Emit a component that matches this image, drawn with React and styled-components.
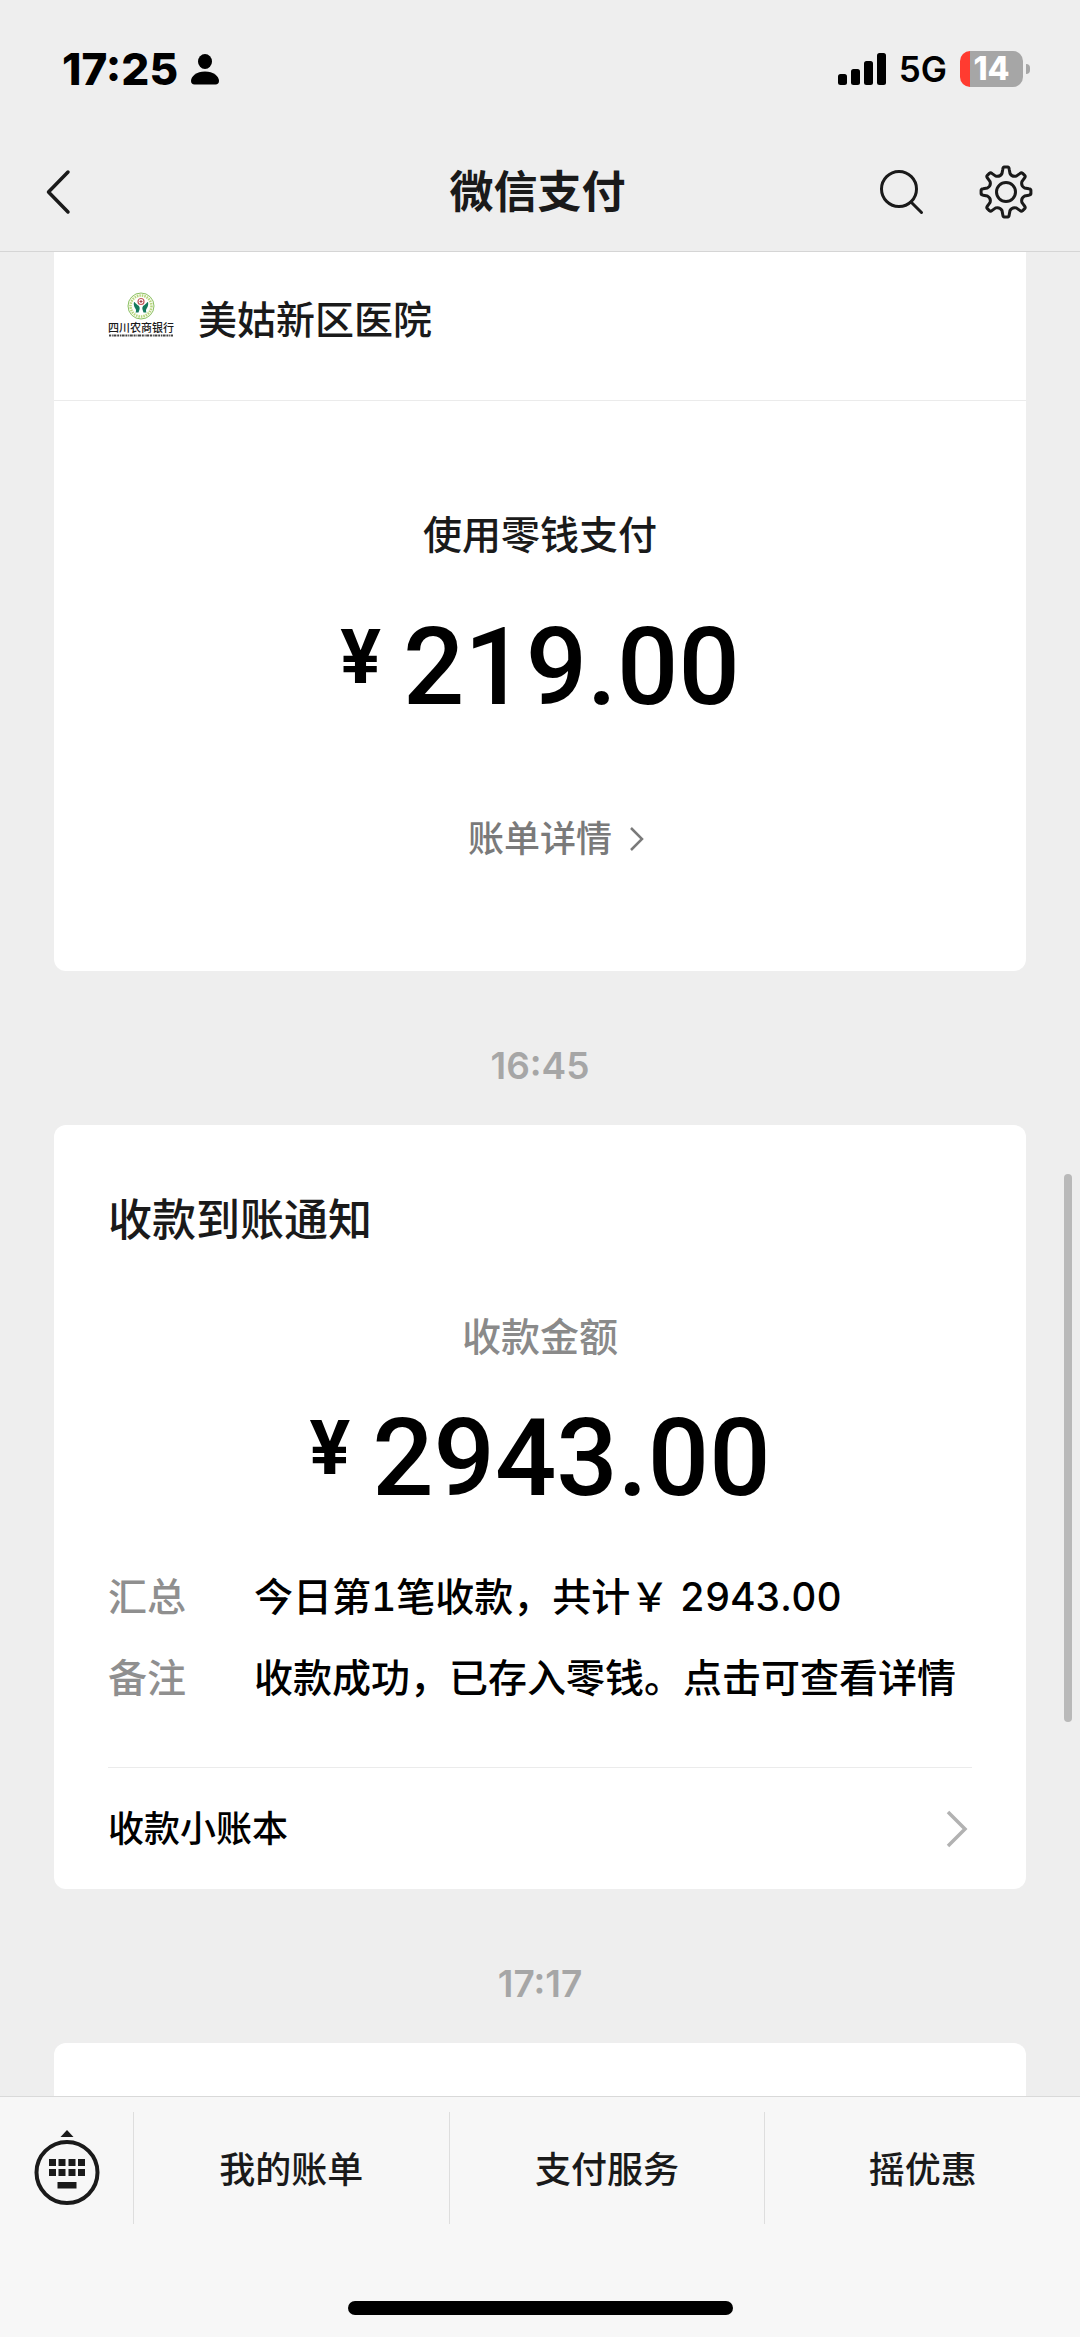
import React from 'react';
import styled, { createGlobalStyle } from 'styled-components';

const GlobalStyle = createGlobalStyle`
  *, *::before, *::after { box-sizing: border-box; }
  body {
    margin: 0;
    background: #eeeeee;
    color: #1a1a1a;
    font-family: Inter, "Noto Sans CJK SC", sans-serif;
    font-size: 39px;
    font-weight: 500;
  }
  h1, h2, p, dl, dt, dd { margin: 0; font: inherit; }
  svg { display: block; flex: none; }
`;

const Screen = styled.div`
  position: relative;
  display: flex;
  flex-direction: column;
  min-height: 100vh;
  overflow: hidden;
`;

const Header = styled.header`
  border-bottom: 1px solid #d5d5d5;
`;

const StatusBar = styled.div`
  display: flex;
  align-items: center;
  justify-content: space-between;
  height: 138px;
  padding: 0 50px 0 62px;
  color: #000;
`;

const StatusGroup = styled.div`
  display: flex;
  align-items: center;
  gap: ${(p) => p.$gap}px;
`;

const Clock = styled.time`
  font-size: 44px;
  font-weight: 800;
  line-height: 48px;
`;

const Network = styled.span`
  font-size: 35px;
  font-weight: 600;
  line-height: 40px;
`;

const Battery = styled.span`
  display: flex;
  align-items: center;
  gap: 3px;
`;

const BatteryBody = styled.span`
  display: flex;
  align-items: center;
  justify-content: center;
  width: 63px;
  height: 36px;
  border-radius: 10px;
  background: linear-gradient(to right, #ff3b30 10px, #a6a6a6 10px);
  color: #fff;
  font-size: 32px;
  font-weight: 800;
  line-height: 36px;
`;

const BatteryNub = styled.span`
  width: 4px;
  height: 10px;
  border-radius: 0 5px 5px 0;
  background: #a6a6a6;
`;

const NavBar = styled.nav`
  display: grid;
  grid-template-columns: 1fr auto 1fr;
  align-items: center;
  height: 113px;
  padding: 0 47px 6px 42px;
`;

const Title = styled.h1`
  font-size: 44px;
  font-weight: 700;
  line-height: 60px;
`;

const NavActions = styled.div`
  display: flex;
  justify-content: flex-end;
  gap: 52px;
`;

const IconButton = styled.button`
  display: flex;
  justify-self: start;
  padding: 0;
  border: 0;
  background: none;
  color: #1a1a1a;
`;

const Messages = styled.main`
  position: relative;
  display: flex;
  flex: 1;
  flex-direction: column;
  padding: 0 54px;
`;

const ScrollThumb = styled.div`
  position: absolute;
  top: 50%;
  right: 8px;
  width: 8px;
  height: 548px;
  border-radius: 4px;
  background: #b9b9b9;
`;

const Card = styled.article`
  flex: ${(p) => (p.$fill ? 1 : 'none')};
  border-radius: ${(p) => p.$radius};
  background: #fff;
`;

const Merchant = styled.div`
  display: flex;
  align-items: center;
  gap: 24px;
  height: 149px;
  padding: 0 54px 12px;
  border-bottom: 1px solid #ebebeb;
`;

const MerchantName = styled.h2`
  line-height: 56px;
`;

const Logo = styled.div`
  display: flex;
  flex-direction: column;
  align-items: center;
  padding-bottom: 12px;
`;

const LogoName = styled.span`
  font-family: "Noto Sans CJK SC", sans-serif;
  font-size: 11px;
  font-weight: 500;
  line-height: 14px;
`;

const PaymentBody = styled.div`
  padding: 106px 54px 108px;
`;

const Caption = styled.p`
  color: ${(p) => (p.$muted ? '#8a8a8a' : '#1a1a1a')};
  line-height: 56px;
  text-align: center;
`;

const AmountRow = styled.p`
  display: flex;
  justify-content: center;
  gap: 22px;
  color: #000;
  font-family: Roboto, sans-serif;
  font-size: 108px;
  font-weight: 500;
  line-height: 112px;
`;

const Currency = styled.span`
  font-size: 76px;
  font-weight: 700;
  line-height: 92px;
`;

const PaymentAmount = styled.div`
  padding: 48px 0 92px;
`;

const DetailLink = styled.a`
  display: grid;
  grid-template-columns: 1fr auto 1fr;
  align-items: center;
  column-gap: 17px;
  color: #7a7a7a;
  font-size: 36px;
  line-height: 48px;
  text-decoration: none;

  &::before { content: ''; }
`;

const Timestamp = styled.time`
  display: block;
  height: 154px;
  padding-top: 71px;
  color: #a6a6a6;
  font-size: 37px;
  font-weight: 600;
  line-height: 48px;
  text-align: center;
`;

const NoticeBody = styled.div`
  padding: 65px 54px 0;
`;

const NoticeTitle = styled.h2`
  padding-bottom: 59px;
  font-size: 44px;
  line-height: 60px;
`;

const NoticeAmount = styled.div`
  padding: 37px 0 55px;
`;

const Facts = styled.dl`
  display: grid;
  grid-template-columns: auto 1fr;
  gap: 25px 68px;
  padding-bottom: 61px;
  font-variant-numeric: tabular-nums;
  line-height: 56px;
  white-space: nowrap;
`;

const FactName = styled.dt`
  color: #8f8f8f;
`;

const FactValue = styled.dd`
  color: #000;
`;

const LedgerLink = styled.a`
  display: flex;
  align-items: center;
  justify-content: space-between;
  height: 122px;
  padding-right: 4px;
  border-top: 1px solid #ebebeb;
  color: #000;
  font-size: 36px;
  line-height: 48px;
  text-decoration: none;
`;

const Footer = styled.footer`
  padding: 15px 0 22px;
  border-top: 1px solid #d9d9d9;
  background: #f7f7f7;
`;

const Menu = styled.div`
  display: flex;
  height: 112px;
`;

const KeyboardButton = styled.button`
  display: flex;
  align-items: center;
  width: 133px;
  padding: 0 0 0 34px;
  border: 0;
  background: none;
  color: #1a1a1a;
`;

const MenuButton = styled.button`
  flex: 1;
  padding: 4px 0 0;
  border: 0;
  border-left: 1px solid #dedede;
  background: none;
  color: #1a1a1a;
  font: inherit;
  font-size: 36px;
  line-height: 48px;
`;

const HomeIndicator = styled.div`
  width: 385px;
  height: 14px;
  margin: 77px auto 0;
  border-radius: 7px;
  background: #000;
`;

function gearOutline(cx, cy) {
  const at = (r, deg) => {
    const a = (deg * Math.PI) / 180;
    return `${(cx + r * Math.sin(a)).toFixed(1)} ${(cy - r * Math.cos(a)).toFixed(1)}`;
  };
  let d = '';
  for (let i = 0; i < 8; i += 1) {
    const a = i * 45;
    d += `${i ? 'L' : 'M'}${at(19, a - 12)} L${at(23, a - 8)} Q${at(25, a - 7)} ${at(25, a - 4)} `;
    d += `L${at(25, a + 4)} Q${at(25, a + 7)} ${at(23, a + 8)} L${at(19, a + 12)} `;
    d += `Q${at(16, a + 22.5)} ${at(19, a + 33)} `;
  }
  return `${d}Z`;
}

const GearIcon = () => (
  <svg width="54" height="54" viewBox="0 0 54 54" fill="none" stroke="currentColor" strokeWidth="3" strokeLinejoin="round">
    <path d={gearOutline(27, 27)} />
    <circle cx="27" cy="27" r="9.5" />
  </svg>
);

const SearchIcon = () => (
  <svg width="48" height="54" viewBox="0 0 48 54" fill="none" stroke="currentColor" strokeWidth="3" strokeLinecap="round">
    <circle cx="20" cy="24" r="17.5" />
    <path d="M32 37 42.500 47.500" />
  </svg>
);

const BackIcon = () => (
  <svg width="32" height="48" viewBox="0 0 32 48" fill="none" stroke="currentColor" strokeWidth="3.5" strokeLinecap="round" strokeLinejoin="round">
    <path d="M26 4 6.5 24 26 44" />
  </svg>
);

const PersonIcon = () => (
  <svg width="30" height="32" viewBox="0 0 30 32" fill="currentColor">
    <ellipse cx="15" cy="8.5" rx="7" ry="7.5" />
    <path d="M15 18.5c8.500 0 14 4.800 14 9.500 0 2.200-1.300 3.500-3.500 3.500h-21C2.300 31.500 1 30.200 1 28c0-4.700 5.500-9.500 14-9.500Z" />
  </svg>
);

const SignalIcon = () => (
  <svg width="48" height="34" viewBox="0 0 48 34" fill="currentColor">
    <rect x="0" y="22" width="9" height="11" rx="2.500" />
    <rect x="13" y="17" width="9" height="16" rx="2.500" />
    <rect x="26" y="9" width="9" height="24" rx="2.500" />
    <rect x="39" y="1" width="9" height="32" rx="2.500" />
  </svg>
);

const KeyboardIcon = () => (
  <svg width="66" height="78" viewBox="0 0 66 78" fill="currentColor">
    <path d="M33 1 39.500 8h-13Z" />
    <circle cx="33" cy="43.500" r="30.500" fill="none" stroke="currentColor" strokeWidth="4" />
    {[15, 24.5, 34.5, 44].map((x) => (
      <g key={x}>
        <rect x={x} y="30" width="7" height="7" />
        <rect x={x} y="40" width="7" height="7" />
      </g>
    ))}
    <rect x="23.500" y="53" width="19" height="6.500" />
  </svg>
);

const SmallChevron = () => (
  <svg width="16" height="26" viewBox="0 0 16 26" fill="none" stroke="currentColor" strokeWidth="2.500">
    <path d="m2 2 11 11L2 24" />
  </svg>
);

const LargeChevron = () => (
  <svg width="22" height="38" viewBox="0 0 22 38" fill="none" stroke="#b2b2b2" strokeWidth="3.500">
    <path d="m2 2 17 17L2 36" />
  </svg>
);

const BankEmblem = () => (
  <svg width="28" height="28" viewBox="0 0 28 28">
    <circle cx="14" cy="14" r="13" fill="#fbfdf4" stroke="#8cc063" strokeWidth="1" />
    <circle cx="14" cy="14" r="10.500" fill="none" stroke="#b5d47c" strokeWidth="2.500" strokeDasharray="1.500 1" />
    <circle cx="14" cy="14" r="8.500" fill="#fff" />
    <path d="M7 10c1 0 2 2 3.500 3 2 1 2.500 2.500 2 4.500l-1 3H8.500c1-2 .5-3-.5-4.500-1.200-2-1.500-4-1-6Z" fill="#137a5c" />
    <path d="M21 10c-1 0-2 2-3.500 3-2 1-2.500 2.500-2 4.500l1 3h3c-1-2-.5-3 .5-4.500 1.200-2 1.500-4 1-6Z" fill="#137a5c" />
    <circle cx="14" cy="9.500" r="3" fill="#fff" stroke="#c4565a" strokeWidth="1.200" />
    <path d="M14 8v3M12.500 9.500h3" stroke="#a04048" strokeWidth="1" />
  </svg>
);

const LogoRule = () => (
  <svg width="66" height="3" viewBox="0 0 66 3" stroke="#444" strokeWidth="2">
    <path d="M1 1.500h64" strokeDasharray="2 .8 1 .6 3 .8" />
  </svg>
);

const Amount = ({ value }) => (
  <AmountRow>
    <Currency>¥</Currency>
    <span>{value}</span>
  </AmountRow>
);

const facts = [
  ['汇总', '今日第1笔收款，共计￥ 2943.00'],
  ['备注', '收款成功，已存入零钱。点击可查看详情'],
];

export default function App() {
  return (
    <Screen>
      <GlobalStyle />
      <Header>
        <StatusBar>
          <StatusGroup $gap={12}>
            <Clock>17:25</Clock>
            <PersonIcon />
          </StatusGroup>
          <StatusGroup $gap={13}>
            <SignalIcon />
            <Network>5G</Network>
            <Battery>
              <BatteryBody>14</BatteryBody>
              <BatteryNub />
            </Battery>
          </StatusGroup>
        </StatusBar>
        <NavBar>
          <IconButton aria-label="返回"><BackIcon /></IconButton>
          <Title>微信支付</Title>
          <NavActions>
            <IconButton aria-label="搜索"><SearchIcon /></IconButton>
            <IconButton aria-label="设置"><GearIcon /></IconButton>
          </NavActions>
        </NavBar>
      </Header>

      <Messages>
        <Card $radius="0 0 12px 12px">
          <Merchant>
            <Logo>
              <BankEmblem />
              <LogoName>四川农商银行</LogoName>
              <LogoRule />
            </Logo>
            <MerchantName>美姑新区医院</MerchantName>
          </Merchant>
          <PaymentBody>
            <Caption>使用零钱支付</Caption>
            <PaymentAmount><Amount value="219.00" /></PaymentAmount>
            <DetailLink href="#bill">
              账单详情
              <SmallChevron />
            </DetailLink>
          </PaymentBody>
        </Card>

        <Timestamp>16:45</Timestamp>

        <Card $radius="12px">
          <NoticeBody>
            <NoticeTitle>收款到账通知</NoticeTitle>
            <Caption $muted>收款金额</Caption>
            <NoticeAmount><Amount value="2943.00" /></NoticeAmount>
            <Facts>
              {facts.map(([name, value]) => (
                <React.Fragment key={name}>
                  <FactName>{name}</FactName>
                  <FactValue>{value}</FactValue>
                </React.Fragment>
              ))}
            </Facts>
            <LedgerLink href="#ledger">
              收款小账本
              <LargeChevron />
            </LedgerLink>
          </NoticeBody>
        </Card>

        <Timestamp>17:17</Timestamp>

        <Card $fill $radius="12px 12px 0 0" />
        <ScrollThumb />
      </Messages>

      <Footer>
        <Menu>
          <KeyboardButton aria-label="键盘"><KeyboardIcon /></KeyboardButton>
          <MenuButton>我的账单</MenuButton>
          <MenuButton>支付服务</MenuButton>
          <MenuButton>摇优惠</MenuButton>
        </Menu>
        <HomeIndicator />
      </Footer>
    </Screen>
  );
}
